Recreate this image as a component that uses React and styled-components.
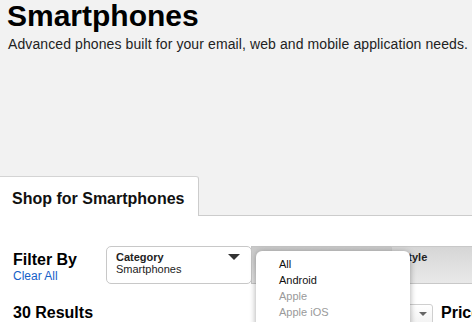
import React from 'react';
import styled, { createGlobalStyle } from 'styled-components';

const GlobalStyle = createGlobalStyle`
  html, body {
    margin: 0;
    padding: 0;
    background: #ffffff;
    overflow: hidden;
    font-family: "Liberation Sans", Arial, sans-serif;
    color: #000;
  }
`;

const Page = styled.div`
  width: 560px;
`;

const Header = styled.header`
  height: 216px;
  background: #f2f2f2;
  display: flex;
  flex-direction: column;
  justify-content: space-between;
`;

const TitleBlock = styled.div`
  padding-left: 7px;
`;

const Title = styled.h1`
  margin: 0;
  font-size: 30px;
  line-height: 31px;
  font-weight: bold;
`;

const Subtitle = styled.p`
  margin: 4px 0 0 1px;
  font-size: 14px;
  line-height: 18px;
  letter-spacing: 0.1px;
  color: #222;
`;

const TabRow = styled.nav`
  display: flex;
  align-items: flex-end;
  border-bottom: 1px solid #cccccc;
`;

const Tab = styled.div`
  width: 186px;
  height: 26px;
  padding: 13px 0 0 12px;
  margin-bottom: -1px;
  background: #ffffff;
  border-top: 1px solid #d4d4d4;
  border-right: 1px solid #cccccc;
  border-top-right-radius: 3px;
  font-size: 16px;
  line-height: 18px;
  font-weight: bold;
  color: #111;
`;

const FilterBar = styled.section`
  display: flex;
  align-items: flex-start;
  padding: 30px 0 0 13px;
`;

const FilterHeading = styled.div`
  width: 93px;
  padding-top: 5px;
`;

const FilterTitle = styled.div`
  font-size: 16px;
  line-height: 18px;
  font-weight: bold;
`;

const ClearAll = styled.a`
  display: block;
  font-size: 12px;
  line-height: 14px;
  color: #1560c8;
  text-decoration: none;
`;

const FilterBox = styled.div`
  position: relative;
  box-sizing: border-box;
  width: ${p => p.width}px;
  height: 38px;
  margin-left: ${p => (p.first ? 0 : -1)}px;
  padding: 4px 11px 0 9px;
  display: flex;
  justify-content: space-between;
  align-items: flex-start;
  border: 1px solid ${p => (p.active ? '#c4c4c4' : '#c8c8c8')};
  border-radius: ${p => (p.first ? '5px' : '0')};
  background: ${p =>
    p.active
      ? 'linear-gradient(#c9c9c9, #e2e2e2)'
      : p.tinted
      ? 'linear-gradient(#d6d6d6, #e9e9e9)'
      : '#ffffff'};
`;

const FilterLabel = styled.div`
  font-size: 11px;
  line-height: 12px;
  font-weight: bold;
  color: #222;
`;

const FilterValue = styled.div`
  font-size: 11px;
  line-height: 12px;
  color: #222;
`;

const Arrow = styled.span`
  width: 0;
  height: 0;
  margin-top: ${p => p.offset}px;
  border-left: ${p => p.size}px solid transparent;
  border-right: ${p => p.size}px solid transparent;
  border-top: ${p => p.depth || p.size}px solid ${p => p.color || '#333'};
`;

const Menu = styled.ul`
  position: absolute;
  top: 4px;
  left: 4px;
  z-index: 10;
  width: 154px;
  margin: 0;
  padding: 5px 0 8px 23px;
  box-sizing: border-box;
  list-style: none;
  background: #ffffff;
  border-radius: 6px;
  box-shadow: 0 1px 6px rgba(0, 0, 0, 0.35);
`;

const MenuItem = styled.li`
  font-size: 11px;
  line-height: 16px;
  color: ${p => (p.disabled ? '#9a9a9a' : '#111')};
`;

const ResultsRow = styled.section`
  display: flex;
  align-items: flex-start;
  padding: 20px 0 0 13px;
`;

const ResultsCount = styled.div`
  flex: 0 0 307px;
  font-size: 16px;
  line-height: 18px;
  font-weight: bold;
`;

const SortSelect = styled.div`
  box-sizing: border-box;
  width: 113px;
  height: 24px;
  display: flex;
  justify-content: flex-end;
  align-items: flex-start;
  padding: 0 5px 0 0;
  border: 1px solid #cfcfcf;
  border-radius: 3px;
  background: linear-gradient(#ffffff, #f0f0f0);
`;

const SortLabel = styled.div`
  margin-left: 8px;
  font-size: 16px;
  line-height: 18px;
  font-weight: bold;
`;

const brands = [
  { name: 'All' },
  { name: 'Android' },
  { name: 'Apple', disabled: true },
  { name: 'Apple iOS', disabled: true },
  { name: 'BlackBerry', disabled: true },
  { name: 'BlackBerry OS', disabled: true },
];

const App = () => {
  return (
    <Page>
      <GlobalStyle />
      <Header>
        <TitleBlock>
          <Title>Smartphones</Title>
          <Subtitle>Advanced phones built for your email, web and mobile application needs.</Subtitle>
        </TitleBlock>
        <TabRow>
          <Tab>Shop for Smartphones</Tab>
        </TabRow>
      </Header>

      <FilterBar>
        <FilterHeading>
          <FilterTitle>Filter By</FilterTitle>
          <ClearAll href="#">Clear All</ClearAll>
        </FilterHeading>
        <FilterBox first width={146}>
          <div>
            <FilterLabel>Category</FilterLabel>
            <FilterValue>Smartphones</FilterValue>
          </div>
          <Arrow size={6} offset={3} />
        </FilterBox>
        <FilterBox active width={141}>
          <Menu>
            {brands.map(b => (
              <MenuItem key={b.name} disabled={b.disabled}>{b.name}</MenuItem>
            ))}
          </Menu>
        </FilterBox>
        <FilterBox tinted width={150}>
          <FilterLabel>Style</FilterLabel>
        </FilterBox>
      </FilterBar>

      <ResultsRow>
        <ResultsCount>30 Results</ResultsCount>
        <SortSelect>
          <Arrow size={4.5} depth={4} offset={7} color="#666" />
        </SortSelect>
        <SortLabel>Price</SortLabel>
      </ResultsRow>
    </Page>
  );
};

export default App;
